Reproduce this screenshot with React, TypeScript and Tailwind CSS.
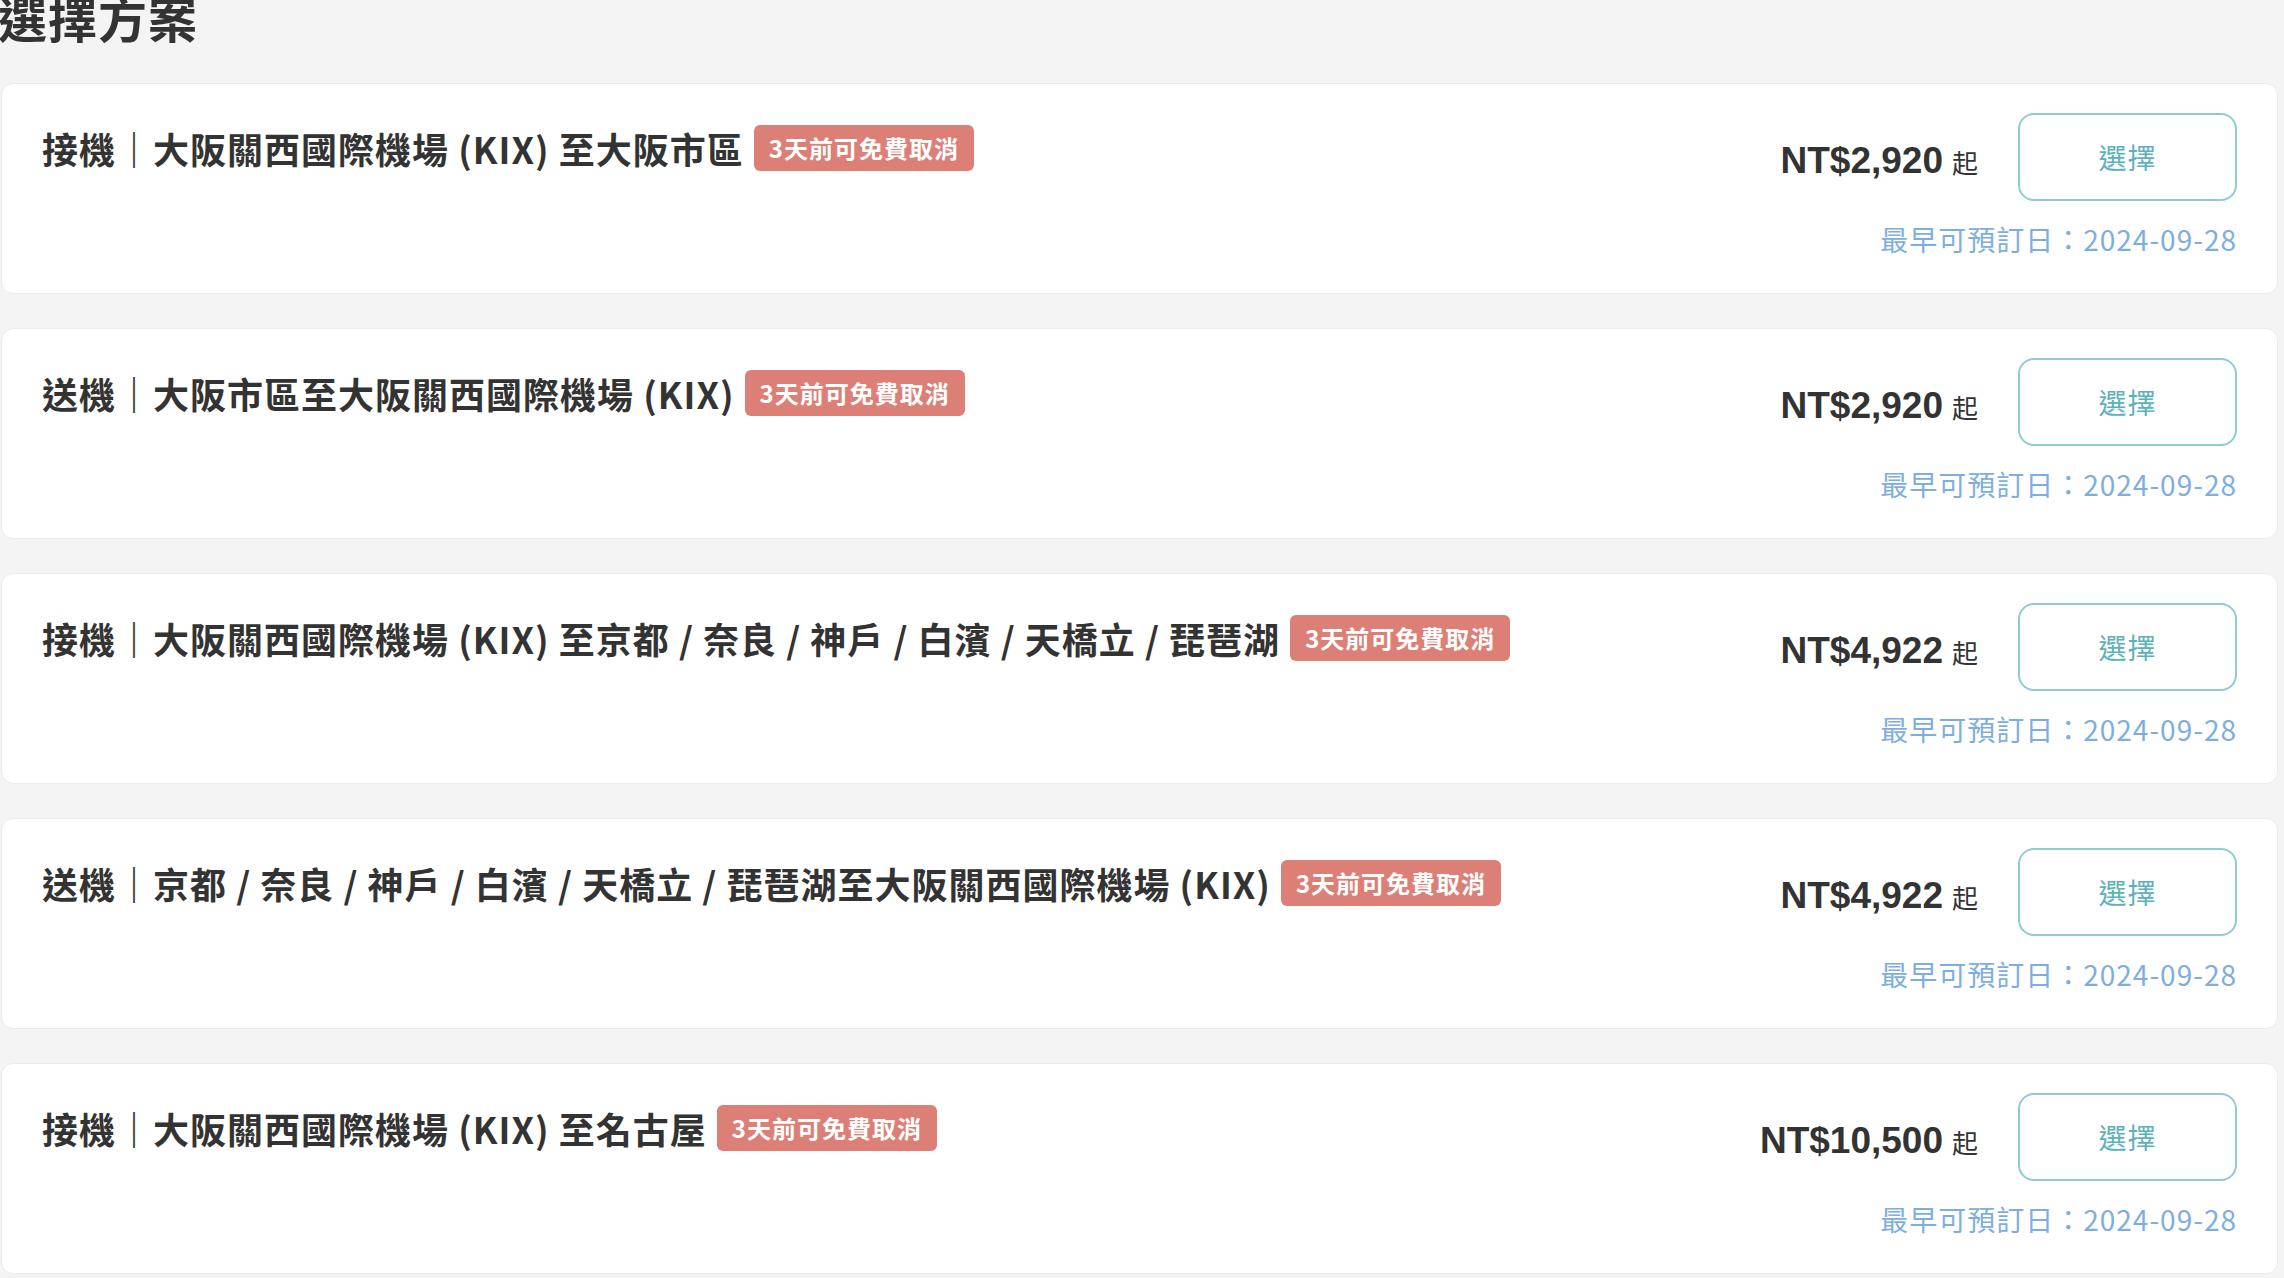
const plans = [
  {
    type: "接機",
    route: "大阪關西國際機場 (KIX) 至大阪市區",
    price: "NT$2,920",
  },
  {
    type: "送機",
    route: "大阪市區至大阪關西國際機場 (KIX)",
    price: "NT$2,920",
  },
  {
    type: "接機",
    route: "大阪關西國際機場 (KIX) 至京都 / 奈良 / 神戶 / 白濱 / 天橋立 / 琵琶湖",
    price: "NT$4,922",
  },
  {
    type: "送機",
    route: "京都 / 奈良 / 神戶 / 白濱 / 天橋立 / 琵琶湖至大阪關西國際機場 (KIX)",
    price: "NT$4,922",
  },
  {
    type: "接機",
    route: "大阪關西國際機場 (KIX) 至名古屋",
    price: "NT$10,500",
  },
];

function PlanCard({ type, route, price }: { type: string; route: string; price: string }) {
  return (
    <div className="flex justify-between items-start bg-white border border-[#ebebeb] rounded-[12px] pt-[29px] pb-[33px] px-[40px]">
      <div className="mt-[8px] flex items-center">
        <h3 className="text-[36px] leading-[54px] font-bold text-[#333] tracking-[1px] whitespace-nowrap">
          {type}｜{route}
        </h3>
        <span className="ml-[10px] h-[46px] px-[15px] flex items-center rounded-[6px] bg-[#dc7f77] text-white text-[24px] font-bold tracking-[1px] whitespace-nowrap">
          3天前可免費取消
        </span>
      </div>

      <div className="flex flex-col items-end">
        <div className="flex items-center">
          <div className="pt-[8px] flex items-baseline">
            <span className="text-[37px] font-bold text-[#333] font-['Liberation_Sans',Arial,sans-serif]">
              {price}
            </span>
            <span className="ml-[9px] text-[26px] text-[#333]">起</span>
          </div>
          <button
            type="button"
            className="ml-[40px] w-[219px] h-[88px] rounded-[16px] border-2 border-[#8fcbd4] bg-white text-[28px] text-[#5cb2b9] tracking-[1px]"
          >
            選擇
          </button>
        </div>
        <p className="mt-[17px] text-[28px] leading-[42px] text-[#7eaee0] tracking-[1px]">
          最早可預訂日：2024-09-28
        </p>
      </div>
    </div>
  );
}

export default function App() {
  return (
    <div className="min-h-screen bg-[#f4f4f4] overflow-hidden font-['Noto_Sans_CJK_TC','Noto_Sans',sans-serif]">
      <h2 className="-mt-[8px] -ml-[2px] text-[49px] leading-none font-bold text-[#333] tracking-[1px]">選擇方案</h2>

      <div className="mt-[42px] pl-px pr-[6px] flex flex-col gap-[34px]">
        {plans.map((p, i) => (
          <PlanCard key={i} type={p.type} route={p.route} price={p.price} />
        ))}
      </div>
    </div>
  );
}
